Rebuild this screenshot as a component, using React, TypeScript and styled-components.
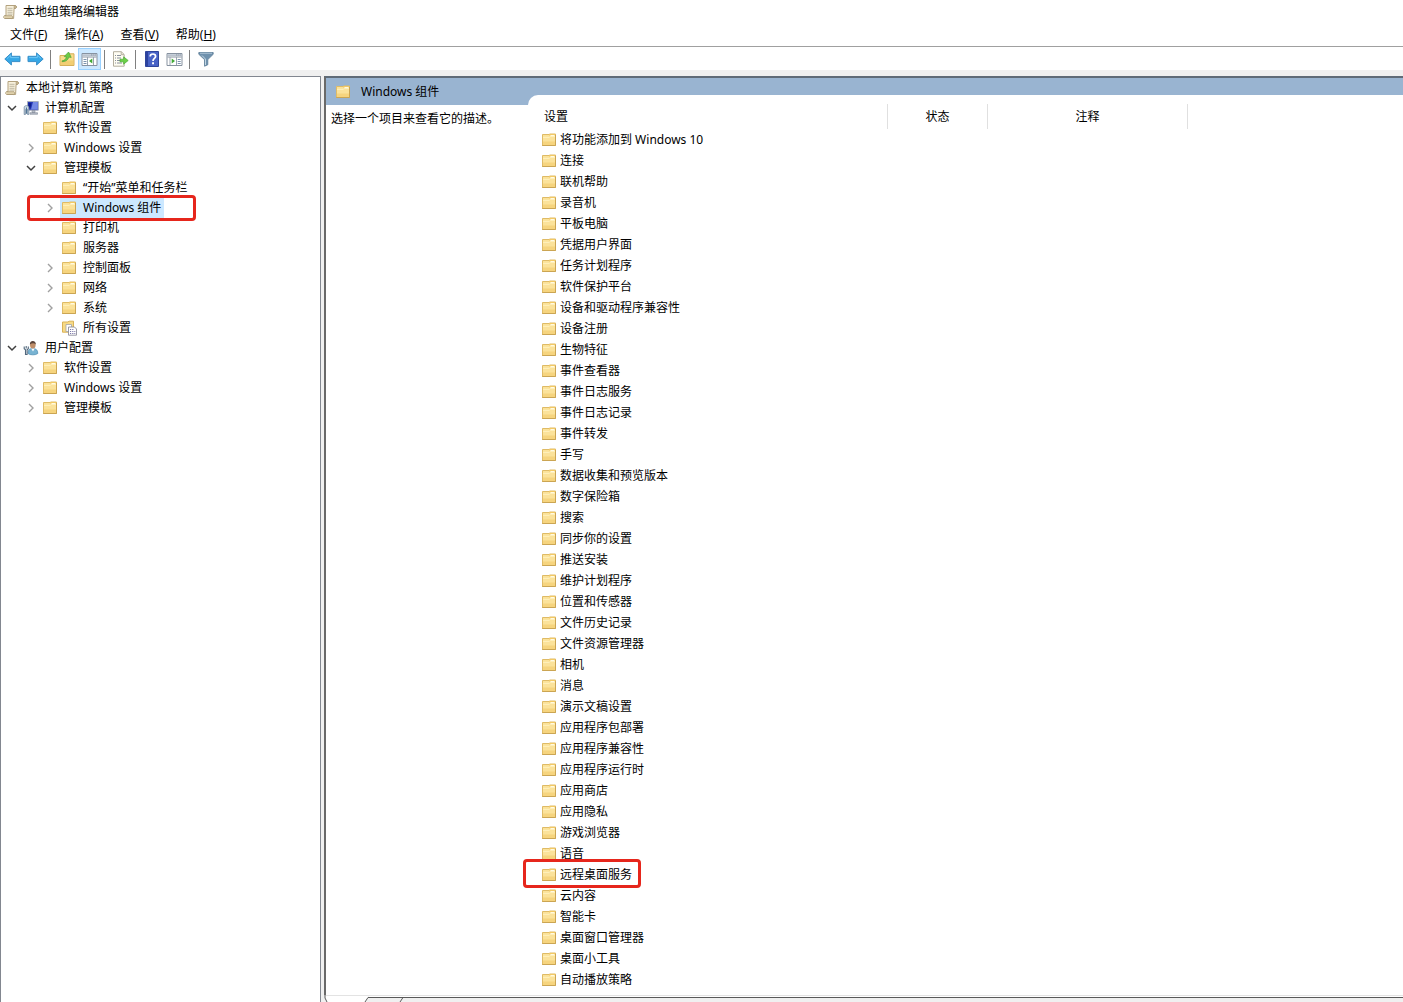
import React from 'react';
import styled, { createGlobalStyle, css } from 'styled-components';

const GlobalStyle = createGlobalStyle`
  * { box-sizing: border-box; }
  body {
    margin: 0;
    background: #fff;
    color: #000;
    font-family: "Noto Sans", "Noto Sans CJK SC", sans-serif;
    font-size: 12px;
    line-height: 20px;
  }
  button { font: inherit; color: inherit; border: 0; padding: 0; background: none; }
  svg { display: block; flex: none; }
`;

const Window = styled.div`
  display: flex;
  flex-direction: column;
  height: 100vh;
  overflow: hidden;
`;

const TitleBar = styled.header`
  display: flex;
  align-items: center;
  gap: 5px;
  height: 24px;
  padding-left: 2px;
`;

const Title = styled.h1`
  margin: 0;
  font-size: 12px;
  font-weight: 400;
`;

const MenuBar = styled.nav`
  display: flex;
  align-items: center;
  gap: 1px;
  height: 23px;
  padding-left: 2px;
  border-bottom: 1px solid #a0a0a0;
`;

const MenuButton = styled.button`
  padding: 0 8px;
`;

const Toolbar = styled.div`
  display: flex;
  align-items: center;
  height: 23px;
  padding: 1px 0 0 1px;
`;

const ToolButton = styled.button<{ $on?: boolean }>`
  display: flex;
  align-items: center;
  justify-content: center;
  width: 23px;
  height: 22px;
  ${(p) =>
    p.$on &&
    css`
      background: #cce8ff;
      border: 1px solid #99d1ff;
    `}
`;

const Separator = styled.span`
  width: 1px;
  height: 19px;
  margin: 0 4px 0 3px;
  background: #808080;
`;

const Workspace = styled.div`
  flex: 1;
  min-height: 0;
  display: grid;
  grid-template-columns: 321px minmax(0, 1fr);
  gap: 3px;
  padding-top: 6px;
  background: #f0f0f0;
`;

const TreePane = styled.nav`
  padding-top: 1px;
  background: #fff;
  border: 1px solid #828790;
  border-bottom: 0;
`;

const TreeList = styled.ul`
  margin: 0;
  padding: 0;
  list-style: none;
`;

const TreeRow = styled.li<{ $level: number }>`
  position: relative;
  display: flex;
  align-items: center;
  height: 20px;
  padding-left: ${(p) => (p.$level === 0 ? 3 : p.$level * 19 - 16)}px;
`;

const Expander = styled.button`
  display: flex;
  align-items: center;
  justify-content: center;
  width: 16px;
  height: 20px;
  margin-right: 2px;
`;

const ExpanderGap = styled.span`
  width: 16px;
  margin-right: 2px;
`;

const NodeLabel = styled.span<{ $selected?: boolean; $root?: boolean }>`
  display: flex;
  align-items: center;
  gap: 6px;
  height: 20px;
  padding: 0 3px 0 ${(p) => (p.$root ? 0 : 1)}px;
  background: ${(p) => (p.$selected ? '#cce8ff' : 'transparent')};
`;

const Highlight = styled.span<{ $place: 'tree' | 'list' }>`
  position: absolute;
  border: 3px solid #e6261c;
  border-radius: 4px;
  pointer-events: none;
  ${(p) =>
    p.$place === 'tree'
      ? css`
          top: -3px;
          left: 26px;
          width: 169px;
          height: 26px;
        `
      : css`
          top: -6px;
          left: -18px;
          width: 118px;
          height: 29px;
        `}
`;

const DetailPane = styled.main`
  display: flex;
  flex-direction: column;
  min-height: 0;
  border-top: 2px solid #5f6b78;
  border-left: 2px solid #696969;
  background: #fff;
`;

const DetailBody = styled.div`
  flex: 1;
  min-height: 0;
  display: grid;
  grid-template-columns: 202px minmax(0, 1fr);
  background: #99b4d1;
`;

const Description = styled.section`
  display: flex;
  flex-direction: column;
`;

const DetailTitle = styled.h2`
  display: flex;
  align-items: center;
  gap: 10px;
  height: 27px;
  margin: 0;
  padding-left: 9px;
  font-size: 12px;
  font-weight: 400;
`;

const DescriptionText = styled.p`
  flex: 1;
  margin: 0;
  padding: 4px 5px;
  background: #fff;
`;

const ListArea = styled.section`
  margin-top: 17px;
  padding-top: 9px;
  background: #fff;
  border-top-left-radius: 10px;
`;

const SettingsTable = styled.table`
  width: 100%;
  table-layout: fixed;
  border-collapse: separate;
  border-spacing: 0;
`;

const HeadCell = styled.th<{ $width?: number; $align?: 'left' | 'center' }>`
  width: ${(p) => (p.$width ? `${p.$width}px` : 'auto')};
  height: 25px;
  padding: 0 0 0 ${(p) => (p.$align === 'left' ? 16 : 0)}px;
  border-right: ${(p) => (p.$width ? '1px solid #e0e0e0' : '0')};
  font-weight: 400;
  text-align: ${(p) => p.$align || 'center'};
`;

const Cell = styled.td`
  height: 21px;
  padding: 0;
`;

const Setting = styled.div`
  position: relative;
  display: flex;
  align-items: center;
  gap: 3px;
  height: 20px;
  margin: 1px 0 0 13px;
`;

const TabStrip = styled.footer`
  height: 7px;
  margin-left: -2px;
  background: #f0f0f0;
`;

const FolderIcon = () => (
  <svg width="16" height="16" viewBox="0 0 16 16" aria-hidden="true">
    <path d="M1.5 2.5H8l1-.5h5.5v11.5h-13z" fill="#fbe29a" stroke="#dfbb66" />
    <path d="M8.5 2h5.5v1.6H8z" fill="#f3c964" />
    <path d="M9.5 3h4v1h-4z" fill="#fffbe8" />
    <path d="M2 5.4h6.4l1-1H14" stroke="#fff1bd" fill="none" />
    <path d="M2 9.5h12V13H2z" fill="#f3cf72" opacity=".7" />
    <path d="M1.2 13.5h13.3V3" stroke="#cba553" fill="none" />
  </svg>
);

const AllSettingsIcon = () => (
  <svg width="16" height="16" viewBox="0 0 16 16" aria-hidden="true">
    <path d="M1.5 2H7l1-.8h4.5v11h-11z" fill="#f7da86" stroke="#d9b258" />
    <path d="M5 4.5h5.5v7H5z" fill="#fff" stroke="#a5a5a5" strokeWidth=".8" />
    <path d="M7.5 7h6l2 2v6.2h-8z" fill="#fff" stroke="#8d8d9c" strokeWidth=".9" />
    <path d="M9 9.5h1.2M11.2 9.5h1.2M9 11.5h1.2M11.2 11.5h1.2M13.3 11.5h1M9 13.5h1.2M11.2 13.5h1.2M13.3 13.5h1" stroke="#7c78a8" />
  </svg>
);

const ScrollIcon = () => (
  <svg width="16" height="16" viewBox="0 0 16 16" aria-hidden="true">
    <path d="M4 1.5h9.3c1.5.3 1.5 2.6 0 2.9h-1.2L11.6 14.5H2.8c-1.5-.3-1.5-2.6 0-2.9H4z" fill="#f8f1dc" stroke="#b3a27f" />
    <path d="M12.1 4.3V2.6c.3-1.2 2.5-1 2.3.5-.1 1.2-1.2 1.3-2.3 1.2z" fill="#d5c49c" stroke="#a08f6c" strokeWidth=".7" />
    <path d="M2.6 11.7h7.4c1 .8.8 2.3-.2 2.8H2.8" fill="#dfd0aa" stroke="#a08f6c" strokeWidth=".7" />
    <path d="M5.5 4.3h5M5.5 6.3h5M5.5 8.3h5M5.5 10.1h5" stroke="#b0a996" strokeWidth=".8" />
  </svg>
);

const ComputerIcon = () => (
  <svg width="16" height="16" viewBox="0 0 16 16" aria-hidden="true">
    <path d="M4.5 1.5h10.8v8.7H4.5z" fill="#2639b8" stroke="#a8aebb" />
    <path d="M10 2h4.8v7.6H8z" fill="#7388e4" />
    <path d="M5.5 3l3 .2-1.2 5H5.5z" fill="#101f87" />
    <path d="M9 10.5h3v2H9zM7 12.7h7.5v1.6H7z" fill="#b8bec9" stroke="#828a98" strokeWidth=".6" />
    <path d="M1.2 7.2c0-2 4.6-2 4.6 0v7.3H4.6V9.6H2.4v4.9H1.2z" fill="#cfdbe6" stroke="#6f879e" strokeWidth=".8" />
    <path d="M3.5 7.5v6.3" stroke="#527796" />
  </svg>
);

const UserIcon = () => (
  <svg width="16" height="16" viewBox="0 0 16 16" aria-hidden="true">
    <path d="M5 13.5c0-4 1.6-5 4.8-5s5 1.5 5 5c-2 1.8-7.8 1.8-9.8 0z" fill="#78b3d2" stroke="#4b8bb0" strokeWidth=".7" />
    <path d="M8.2 8.5l1.8 3 1.7-3z" fill="#fff" />
    <ellipse cx="9.8" cy="5" rx="2.8" ry="3.5" fill="#c08e68" />
    <path d="M6.9 4.5c-.3-4.7 6-4.7 5.9-.1-1.4-1.5-3.8-1.6-5.9.1z" fill="#59433a" />
    <path d="M1.2 6.5v2.2l1.3 1.1v4.7h1.6V9.8l1.2-1.1V6.5M3.2 6v2.4" fill="none" stroke="#52687d" strokeWidth="1.1" />
  </svg>
);

const ArrowIcon = ({ flip }: { flip?: boolean }) => (
  <svg width="17" height="16" viewBox="0 0 17 16" aria-hidden="true">
    <path
      d={flip ? 'M16.2 8L9.6 1.9v3.4H1v5.3h8.6V14z' : 'M.8 8l6.6-6.1v3.4H16v5.3H7.4V14z'}
      fill="#35a7e6"
      stroke="#3a8fc8"
    />
    <path d={flip ? 'M2 6.6h8.4V4.2L14 7.6' : 'M15 6.6H6.6V4.2L3 7.6'} fill="none" stroke="#6cc6f5" />
  </svg>
);

const UpIcon = () => (
  <svg width="16" height="16" viewBox="0 0 16 16" aria-hidden="true">
    <path d="M1 4.5h7l1.2-1.7H15v11.7H1z" fill="#f8dc8c" stroke="#d6b05a" />
    <path d="M1.6 9.5h12.8V14H1.6z" fill="#efc768" opacity=".7" />
    <path d="M3.2 9.8c2.6-.3 3.6-1.6 4.2-4L5.2 5.5 9.6 1l2.6 5.4-2.4-.3c-.8 3-3 4.6-6.6 4.6z" fill="#6ccb45" stroke="#4aa238" strokeWidth=".7" />
  </svg>
);

const PaneIcon = ({ side }: { side: 'left' | 'right' }) => (
  <svg width="17" height="16" viewBox="0 0 17 16" aria-hidden="true">
    <path d="M1 2.5h15v12H1z" fill="#fff" stroke="#8792a0" />
    <path d="M1.5 3h14v2h-14z" fill="#a3aebb" />
    <path d="M2 3.9h8M11.3 3.9h1M13.3 3.9h1" stroke="#eef2f7" strokeWidth=".8" />
    <path d="M1.5 6h14" stroke="#8792a0" />
    {side === 'left' ? (
      <>
        <path d="M6.5 6v8M12.5 6v8" stroke="#9aa5b1" />
        <path d="M2.5 8.5h3M2.5 10.5h3M2.5 12.5h3" stroke="#7b93ad" />
        <path d="M11.3 7.5v5L8 10z" fill="#42a936" />
      </>
    ) : (
      <>
        <path d="M4 6v8M10.5 6v8" stroke="#9aa5b1" />
        <path d="M11.7 8.5h3M11.7 10.5h3M11.7 12.5h3" stroke="#7b93ad" />
        <path d="M5.7 7.5v5L9 10z" fill="#42a936" />
      </>
    )}
  </svg>
);

const ExportIcon = () => (
  <svg width="17" height="16" viewBox="0 0 17 16" aria-hidden="true">
    <path d="M1.5.7h7.8l2.9 2.8v11.7H1.5z" fill="#fffdf3" stroke="#b3ae9e" />
    <path d="M9.2.9v2.8H12" fill="none" stroke="#b3ae9e" />
    <path d="M3 4.5h1M5 4.5h4M3 7h1M5 7h4M3 9.5h1M5 9.5h3M3 12h1M5 12h5" stroke="#8a919d" />
    <path d="M8 8.2h3.6V5.8L16.2 9.5l-4.6 3.7v-2.4H8z" fill="#6bd048" stroke="#4aab36" strokeWidth=".7" />
  </svg>
);

const HelpIcon = () => (
  <svg width="14" height="16" viewBox="0 0 14 16" aria-hidden="true">
    <path d="M.5.5h13v15H.5z" fill="#4862c6" stroke="#2f459c" />
    <path d="M1 1h2v14H1z" fill="#2c429f" />
    <path d="M5.2 5.4c0-3.2 5.4-3.2 5.4 0 0 2-2.6 2-2.6 4.5" fill="none" stroke="#fff" strokeWidth="1.7" />
    <path d="M7.1 11.2H9v2H7.1z" fill="#fff" />
  </svg>
);

const FilterIcon = () => (
  <svg width="16" height="16" viewBox="0 0 16 16" aria-hidden="true">
    <path d="M.8 1.5h14.4v1.8L9.8 8.6v5.2l-3.3 1.4V8.6L.8 3.3z" fill="#6f91ad" stroke="#5d7d98" strokeWidth=".8" />
    <path d="M2 2.3h12" stroke="#a9c0d2" />
    <path d="M4 4.5l3.5 3.6V14" fill="none" stroke="#c2d6e4" />
  </svg>
);

const ChevronIcon = ({ open }: { open?: boolean }) => (
  <svg width="10" height="10" viewBox="0 0 10 10" aria-hidden="true">
    {open ? (
      <path d="M1 3l4 4 4-4" fill="none" stroke="#404040" strokeWidth="1.5" />
    ) : (
      <path d="M3 1l4 4-4 4" fill="none" stroke="#a0a0a0" strokeWidth="1.4" />
    )}
  </svg>
);

const TabsDrawing = () => (
  <svg width="100%" height="7" aria-hidden="true">
    <path d="M1 0h44l-3 7H3z" fill="#fff" />
    <path d="M0 .5h45" stroke="#e3e3e3" />
    <path d="M1 0v3l2 4M41 7l3-4.5h2000M76 7l3-4.5" fill="none" stroke="#5a5a5a" />
    <path d="M45 .5h2000" stroke="#e3e3e3" />
    <path d="M45 1.5h2000" stroke="#fff" />
  </svg>
);

type NodeIcon = 'folder' | 'scroll' | 'computer' | 'user' | 'all';
interface TreeNode {
  label: string;
  level: number;
  icon?: NodeIcon;
  open?: boolean;
  selected?: boolean;
}

const nodes: TreeNode[] = [
  { label: '本地计算机 策略', level: 0, icon: 'scroll' },
  { label: '计算机配置', level: 1, icon: 'computer', open: true },
  { label: '软件设置', level: 2 },
  { label: 'Windows 设置', level: 2, open: false },
  { label: '管理模板', level: 2, open: true },
  { label: '“开始”菜单和任务栏', level: 3 },
  { label: 'Windows 组件', level: 3, open: false, selected: true },
  { label: '打印机', level: 3 },
  { label: '服务器', level: 3 },
  { label: '控制面板', level: 3, open: false },
  { label: '网络', level: 3, open: false },
  { label: '系统', level: 3, open: false },
  { label: '所有设置', level: 3, icon: 'all' },
  { label: '用户配置', level: 1, icon: 'user', open: true },
  { label: '软件设置', level: 2, open: false },
  { label: 'Windows 设置', level: 2, open: false },
  { label: '管理模板', level: 2, open: false },
];

const settings = [
  '将功能添加到 Windows 10', '连接', '联机帮助', '录音机', '平板电脑', '凭据用户界面',
  '任务计划程序', '软件保护平台', '设备和驱动程序兼容性', '设备注册', '生物特征', '事件查看器',
  '事件日志服务', '事件日志记录', '事件转发', '手写', '数据收集和预览版本', '数字保险箱', '搜索',
  '同步你的设置', '推送安装', '维护计划程序', '位置和传感器', '文件历史记录', '文件资源管理器',
  '相机', '消息', '演示文稿设置', '应用程序包部署', '应用程序兼容性', '应用程序运行时', '应用商店',
  '应用隐私', '游戏浏览器', '语音', '远程桌面服务', '云内容', '智能卡', '桌面窗口管理器',
  '桌面小工具', '自动播放策略',
];

const markedSetting = '远程桌面服务';

const menus = [
  ['文件', 'F'],
  ['操作', 'A'],
  ['查看', 'V'],
  ['帮助', 'H'],
];

const nodeIcons: Record<NodeIcon, React.ReactNode> = {
  folder: <FolderIcon />,
  scroll: <ScrollIcon />,
  computer: <ComputerIcon />,
  user: <UserIcon />,
  all: <AllSettingsIcon />,
};

function TreeItem({ node }: { node: TreeNode }) {
  const root = node.level === 0;
  return (
    <TreeRow $level={node.level}>
      {!root &&
        (node.open === undefined ? (
          <ExpanderGap />
        ) : (
          <Expander type="button" aria-label={node.label} aria-expanded={node.open}>
            <ChevronIcon open={node.open} />
          </Expander>
        ))}
      <NodeLabel $selected={node.selected} $root={root}>
        {nodeIcons[node.icon || 'folder']}
        {node.label}
      </NodeLabel>
      {node.selected && <Highlight $place="tree" />}
    </TreeRow>
  );
}

export default function App() {
  return (
    <>
      <GlobalStyle />
      <Window>
        <TitleBar>
          <ScrollIcon />
          <Title>本地组策略编辑器</Title>
        </TitleBar>
        <MenuBar>
          {menus.map(([name, key]) => (
            <MenuButton key={key} type="button">
              {name}(<u>{key}</u>)
            </MenuButton>
          ))}
        </MenuBar>
        <Toolbar role="toolbar">
          <ToolButton type="button" aria-label="后退"><ArrowIcon /></ToolButton>
          <ToolButton type="button" aria-label="前进"><ArrowIcon flip /></ToolButton>
          <Separator />
          <ToolButton type="button" aria-label="向上"><UpIcon /></ToolButton>
          <ToolButton type="button" aria-label="控制台树" aria-pressed="true" $on><PaneIcon side="left" /></ToolButton>
          <Separator />
          <ToolButton type="button" aria-label="导出列表"><ExportIcon /></ToolButton>
          <Separator />
          <ToolButton type="button" aria-label="帮助"><HelpIcon /></ToolButton>
          <ToolButton type="button" aria-label="操作窗格"><PaneIcon side="right" /></ToolButton>
          <Separator />
          <ToolButton type="button" aria-label="筛选器"><FilterIcon /></ToolButton>
        </Toolbar>
        <Workspace>
          <TreePane>
            <TreeList>
              {nodes.map((node, i) => (
                <TreeItem key={i} node={node} />
              ))}
            </TreeList>
          </TreePane>
          <DetailPane>
            <DetailBody>
              <Description>
                <DetailTitle>
                  <FolderIcon />
                  Windows 组件
                </DetailTitle>
                <DescriptionText>选择一个项目来查看它的描述。</DescriptionText>
              </Description>
              <ListArea>
                <SettingsTable>
                  <thead>
                    <tr>
                      <HeadCell $width={360} $align="left">设置</HeadCell>
                      <HeadCell $width={100}>状态</HeadCell>
                      <HeadCell $width={200}>注释</HeadCell>
                      <HeadCell as="td" />
                    </tr>
                  </thead>
                  <tbody>
                    {settings.map((name) => (
                      <tr key={name}>
                        <Cell>
                          <Setting>
                            <FolderIcon />
                            {name}
                            {name === markedSetting && <Highlight $place="list" />}
                          </Setting>
                        </Cell>
                        <Cell />
                        <Cell />
                        <Cell />
                      </tr>
                    ))}
                  </tbody>
                </SettingsTable>
              </ListArea>
            </DetailBody>
            <TabStrip><TabsDrawing /></TabStrip>
          </DetailPane>
        </Workspace>
      </Window>
    </>
  );
}
